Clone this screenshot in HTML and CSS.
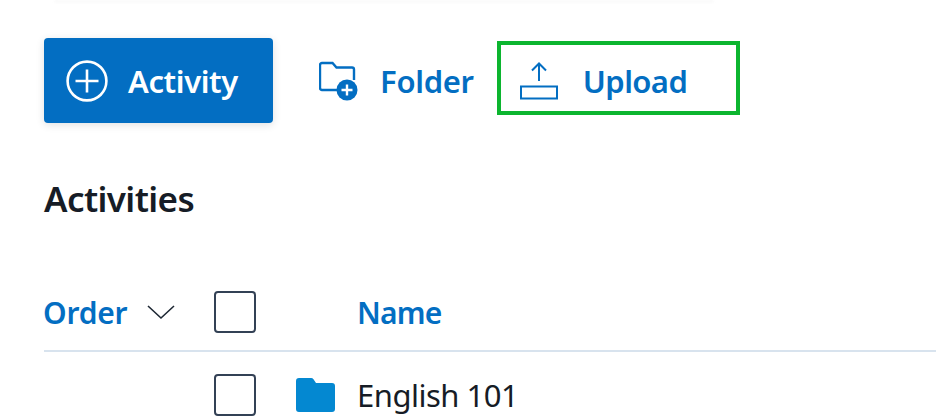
FILE: index.html
```html
<!DOCTYPE html>
<html lang="en">
<head>
    <meta charset="UTF-8">
    <meta name="viewport" content="width=device-width, initial-scale=1.0">
    <title>Activities</title>
    <link rel="stylesheet" href="styles.css">
</head>
<body>
    <div class="top-shade"></div>

    <div class="toolbar">
        <button class="btn-primary">
            <svg class="icon-plus" width="42" height="42" viewBox="0 0 42 42" fill="none" stroke="#fff" stroke-width="2.6">
                <circle cx="21" cy="21" r="19.4"/>
                <path d="M21 9.5v23M9.5 21h23"/>
            </svg>
            Activity
        </button>
        <button class="btn-link btn-folder">
            <svg width="39" height="40" viewBox="0 0 39 40" fill="none">
                <path d="M20 29H3a2 2 0 0 1-2-2V4a2 2 0 0 1 2-2h10.500l4 4.500H33a2 2 0 0 1 2 2V19" stroke="#036ec2" stroke-width="2.400"/>
                <circle cx="28" cy="29" r="10.500" fill="#036ec2"/>
                <path d="M28 23.500v11M22.500 29h11" stroke="#fff" stroke-width="2.400"/>
            </svg>
            Folder
        </button>
        <button class="btn-link btn-upload">
            <svg width="38" height="38" viewBox="0 0 38 38" fill="none" stroke="#036ec2" stroke-width="2">
                <path d="M19 19V2M12 8.500 19 1.500l7 7"/>
                <rect x="1" y="24.500" width="36" height="12"/>
            </svg>
            Upload
        </button>
    </div>

    <h2 class="section-title">Activities</h2>

    <div class="table-head">
        <div class="col-order">
            <span class="head-label">Order</span>
            <svg width="28" height="16" viewBox="0 0 28 16" fill="none" stroke="#1d2733" stroke-width="1.600">
                <path d="M1 2l13 12L27 2"/>
            </svg>
        </div>
        <span class="check"></span>
        <span class="head-label col-name">Name</span>
    </div>

    <div class="table-row">
        <span class="check"></span>
        <svg class="icon-folder" width="39" height="34" viewBox="0 0 39 34">
            <path d="M0 3a3 3 0 0 1 3-3h12a3 3 0 0 1 2.500 1.300L20 5h16a3 3 0 0 1 3 3v23a3 3 0 0 1-3 3H3a3 3 0 0 1-3-3z" fill="#0488d1"/>
        </svg>
        <span class="row-name">English 101</span>
    </div>
</body>
</html>
```

FILE: styles.css
```css
* {
    box-sizing: border-box;
    margin: 0;
    padding: 0;
}

html, body {
    height: 100%;
    overflow: hidden;
}

body {
    font-family: "Noto Sans", "Open Sans", sans-serif;
    background-color: #fff;
    color: #161c26;
    padding-left: 44px;
}

button {
    font: inherit;
    border: none;
    background: none;
    cursor: pointer;
}

.top-shade {
    height: 3px;
    width: 660px;
    margin-left: 10px;
    background: #fafafa;
    border-radius: 2px;
    filter: blur(1px);
}

.toolbar {
    display: flex;
    align-items: center;
    margin-top: 35px;
    height: 85px;
}

.btn-primary {
    display: flex;
    align-items: center;
    width: 229px;
    height: 85px;
    padding-left: 22px;
    gap: 20px;
    background-color: #036ec2;
    color: #fff;
    font-size: 31px;
    font-weight: 600;
    letter-spacing: -0.4px;
    border-radius: 4px;
    box-shadow: 0 2px 8px rgba(0, 0, 0, 0.12);
}

.btn-link {
    display: flex;
    align-items: center;
    color: #036ec2;
    font-size: 31px;
    font-weight: 600;
    letter-spacing: -0.3px;
}

.btn-folder {
    margin-left: 46px;
    gap: 22px;
}

.btn-upload {
    align-self: flex-start;
    width: 243px;
    height: 74px;
    margin-top: 3px;
    margin-left: 23px;
    padding-top: 6px;
    padding-left: 19px;
    gap: 25px;
    border: 4px solid #0cb52f;
    letter-spacing: -0.6px;
}

.section-title {
    font-size: 35px;
    font-weight: 600;
    letter-spacing: -0.6px;
    line-height: 44px;
    margin-top: 54px;
}

.table-head {
    display: flex;
    align-items: center;
    height: 66px;
    margin-top: 65px;
    border-bottom: 2px solid #d8e3ee;
    padding-bottom: 12px;
}

.col-order {
    display: flex;
    align-items: center;
    gap: 20px;
    width: 170px;
}

.head-label {
    margin-left: -1px;
    color: #036ec2;
    font-size: 30px;
    font-weight: 600;
    letter-spacing: -0.2px;
}

.col-name {
    margin-left: 101px;
    letter-spacing: -0.8px;
}

.check {
    display: block;
    width: 42px;
    height: 42px;
    flex: none;
    border: 2px solid #334155;
    border-radius: 4px;
    background: #fff;
}

.table-row {
    display: flex;
    align-items: center;
    height: 42px;
    margin-top: 22px;
    padding-left: 170px;
}

.icon-folder {
    margin-left: 40px;
}

.row-name {
    margin-left: 22px;
    font-size: 31px;
    letter-spacing: -0.5px;
}
```
